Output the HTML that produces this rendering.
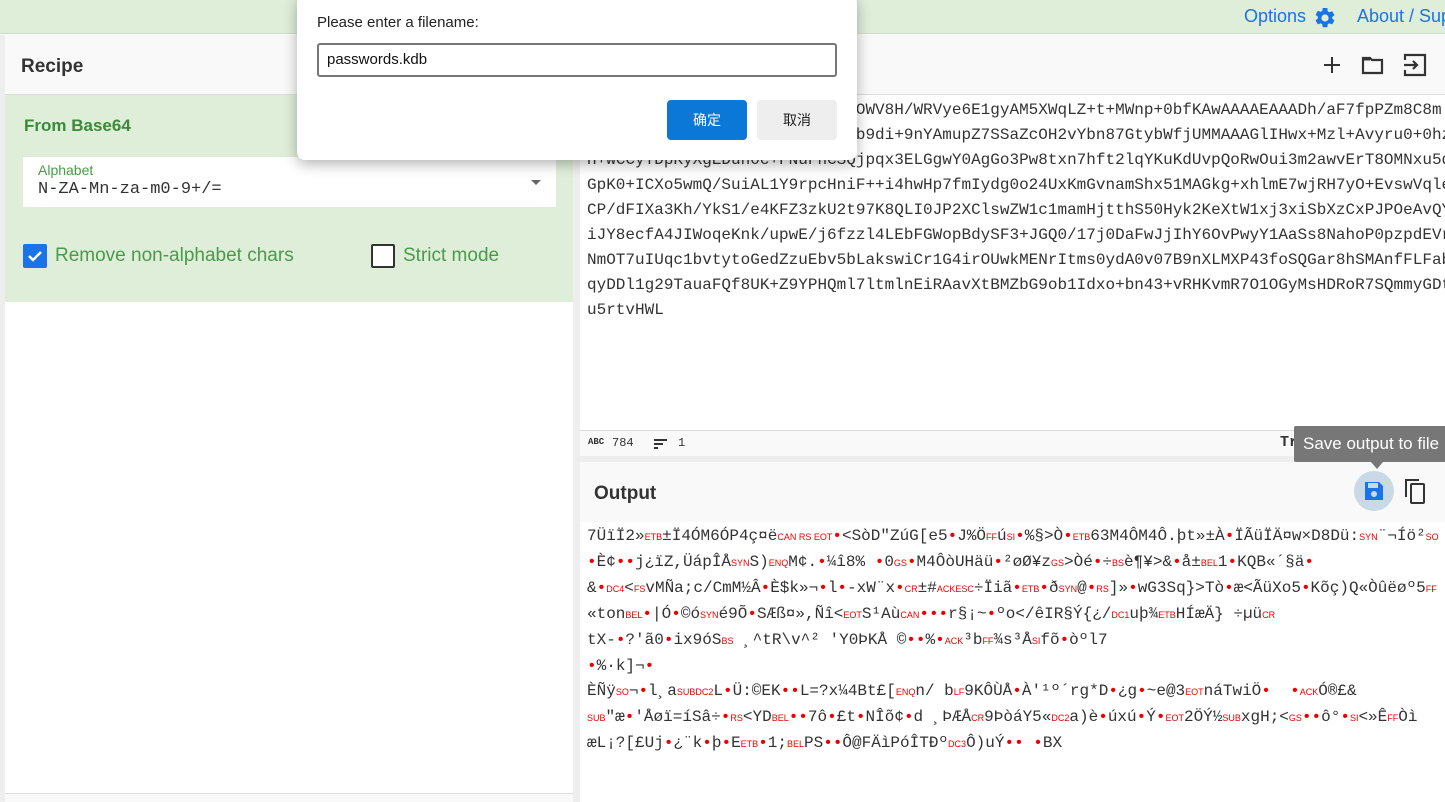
<!DOCTYPE html>
<html><head><meta charset="utf-8">
<style>
*{box-sizing:border-box;margin:0;padding:0}
body{width:1445px;height:802px;overflow:hidden;background:#fff;font-family:"Liberation Sans",sans-serif;position:relative}
.top{position:absolute;left:0;top:0;width:1445px;height:34px;background:#dfeed9;border-bottom:1px solid #d6d6d6}
.top .opt{position:absolute;left:1244px;top:6px;color:#1a73e8;font-size:18px}
.top .about{position:absolute;left:1357px;top:6px;color:#1a73e8;font-size:18px;white-space:nowrap}
.left{position:absolute;left:0;top:35px;width:580px;height:767px;background:#eee}
.lin{position:absolute;left:5px;top:0;width:568px;height:767px;background:#fff}
.rh{position:absolute;left:0;top:0;width:568px;height:60px;background:#f9f9f9;border-bottom:1px solid #ddd}
.rh span{position:absolute;left:16px;top:21px;font-size:19px;font-weight:bold;color:#333}
.op{position:absolute;left:0;top:60px;width:568px;height:207px;background:#dfeed9}
.op .t{position:absolute;left:19px;top:21px;font-size:17px;font-weight:bold;color:#3a8a3a}
.sel{position:absolute;left:18px;top:62px;width:533px;height:50px;background:#fff}
.sel .l{position:absolute;left:15px;top:5px;font-size:14px;color:#4a9a4a}
.sel .v{position:absolute;left:15px;top:23px;font-size:17px;font-family:"Liberation Mono",monospace;color:#333}
.sel .a{position:absolute;right:15px;top:23px;width:0;height:0;border-left:5px solid transparent;border-right:5px solid transparent;border-top:5px solid #666}
.cb{position:absolute;top:149px;width:24px;height:24px;border-radius:2px}
.cbl{position:absolute;top:150px;font-size:19px;color:#4a9a4a}
.bot{position:absolute;left:0;top:758px;width:568px;height:9px;background:#f9f9f9;border-top:1px solid #ddd}
.div{position:absolute;left:573px;top:35px;width:7px;height:767px;background:#eee}
.ih{position:absolute;left:580px;top:35px;width:865px;height:60px;background:#f9f9f9;border-bottom:1px solid #ddd}
.mono{font-family:"Liberation Mono",monospace;font-size:16px;color:#333;white-space:pre;line-height:25px}
.inp{position:absolute;left:587px;top:98px}
.sb{position:absolute;left:580px;top:430px;width:865px;height:26px;background:#f9f9f9;border-top:1px solid #ddd;font-family:"Liberation Mono",monospace;font-size:12px;color:#333}
.gap{position:absolute;left:580px;top:456px;width:865px;height:6px;background:#eee}
.oh{position:absolute;left:580px;top:462px;width:865px;height:60px;background:#f9f9f9}
.oh span{position:absolute;left:14px;top:21px;font-size:19px;font-weight:bold;color:#333}
.out{position:absolute;left:587px;top:524px}
.c{color:#e00;font-size:9px;font-family:"Liberation Sans",sans-serif}
.d{color:#e00}
.tip{position:absolute;left:1294px;top:426px;width:160px;height:36px;background:#777;color:#fff;font-size:17px;padding:8px 9px;white-space:nowrap;border-radius:2px}
.dlg{position:absolute;left:297px;top:-5px;width:560px;height:165px;background:#fff;border-radius:8px;box-shadow:0 4px 14px rgba(0,0,0,.3)}
.dlg .p{position:absolute;left:20px;top:19px;font-size:15px;color:#222}
.dlg .in{position:absolute;left:20px;top:48px;width:520px;height:34px;border:2px solid #777;border-radius:3px;font-size:15px;padding:6px 8px;color:#111}
.btn{position:absolute;top:105px;width:80px;height:40px;border-radius:4px;font-size:14px;text-align:center;line-height:40px}
</style></head><body>
<div class="top">
<span class="opt">Options</span>
<svg style="position:absolute;left:1313px;top:6px" width="24" height="24" viewBox="0 0 24 24"><path fill="#1a73e8" d="M19.14 12.94c.04-.3.06-.61.06-.94s-.02-.64-.07-.94l2.030-1.58a.5.5 0 0 0 .12-.61l-1.92-3.32a.5.5 0 0 0-.59-.22l-2.39.96a7 7 0 0 0-1.62-.94l-.36-2.54A.48.48 0 0 0 13.92 2h-3.840a.47.47 0 0 0-.47.41l-.36 2.54c-.59.24-1.13.57-1.62.94l-2.39-.96a.5.5 0 0 0-.59.22L2.74 8.470a.47.47 0 0 0 .12.61l2.03 1.58c-.05.3-.09.63-.09.94s.02.64.07.94l-2.03 1.58a.5.5 0 0 0-.12.61l1.92 3.32c.12.22.37.29.59.22l2.39-.96c.5.38 1.03.7 1.62.94l.36 2.54c.05.24.24.41.48.41h3.84c.24 0 .44-.17.47-.41l.36-2.54c.59-.24 1.13-.56 1.62-.94l2.39.96c.22.08.47 0 .59-.22l1.92-3.32a.46.46 0 0 0-.12-.61l-2.01-1.58zM12 15.6A3.6 3.6 0 1 1 12 8.4a3.6 3.6 0 0 1 0 7.2z"/></svg>
<span class="about">About / Support</span>
</div>
<div class="left"><div class="lin">
<div class="rh"><span>Recipe</span></div>
<div class="op"><div class="t">From Base64</div>
<div class="sel"><div class="l">Alphabet</div><div class="v">N-ZA-Mn-za-m0-9+/=</div><div class="a"></div></div>
<div class="cb" style="left:18px;background:#1a73e8"><svg width="24" height="24"><path d="M6 12l4 4 8-8" stroke="#fff" stroke-width="2.5" fill="none"/></svg></div>
<div class="cbl" style="left:50px">Remove non-alphabet chars</div>
<div class="cb" style="left:366px;border:2px solid #333;background:#fff"></div>
<div class="cbl" style="left:398px">Strict mode</div>
</div>
<div class="bot"></div>
</div></div>
<div class="div"></div>
<div class="ih">
<svg style="position:absolute;left:740px;top:18px" width="24" height="24"><path d="M12 4v16M4 12h16" stroke="#333" stroke-width="2"/></svg>
<svg style="position:absolute;left:780px;top:18px" width="26" height="24"><path d="M3 5h7l2 2h10v13H3z" stroke="#333" stroke-width="2.2" fill="none"/><path d="M3 6h7" stroke="#333" stroke-width="3"/></svg>
<svg style="position:absolute;left:822px;top:17px" width="26" height="26"><path d="M3 8V3h20v20H3v-5" stroke="#333" stroke-width="2.2" fill="none"/><path d="M2 13h13M11 9l4 4-4 4" stroke="#333" stroke-width="2.2" fill="none"/></svg>
</div>
<div class="mono inp">HdfSK2CgEjW9OPh0fG/Y0yqmAb3kOWV8H/WRVye6E1gyAM5XWqLZ+t+MWnp+0bfKAwAAAAEAAADh/aF7fpPZm8C8m
nG8+pL0wQrT1xYc4TkQa7Xp2LmRcb9di+9nYAmupZ7SSaZcOH2vYbn87GtybWfjUMMAAAGlIHwx+Mzl+Avyru0+0hz
H+wCCyTDpKyXgEDun0c+FNuFhCSQjpqx3ELGgwY0AgGo3Pw8txn7hft2lqYKuKdUvpQoRwOui3m2awvErT8OMNxu5d
GpK0+ICXo5wmQ/SuiAL1Y9rpcHniF++i4hwHp7fmIydg0o24UxKmGvnamShx51MAGkg+xhlmE7wjRH7yO+EvswVqle
CP/dFIXa3Kh/YkS1/e4KFZ3zkU2t97K8QLI0JP2XClswZW1c1mamHjtthS50Hyk2KeXtW1xj3xiSbXzCxPJPOeAvQY
iJY8ecfA4JIWoqeKnk/upwE/j6fzzl4LEbFGWopBdySF3+JGQ0/17j0DaFwJjIhY6OvPwyY1AaSs8NahoP0pzpdEVr
NmOT7uIUqc1bvtytoGedZzuEbv5bLakswiCr1G4irOUwkMENrItms0ydA0v07B9nXLMXP43foSQGar8hSMAnfFLFab
qyDDl1g29TauaFQf8UK+Z9YPHQml7ltmlnEiRAavXtBMZbG9ob1Idxo+bn43+vRHKvmR7O1OGyMsHDRoR7SQmmyGDt
u5rtvHWL</div>
<div class="sb"><span style="position:absolute;left:8px;top:6px;font-size:9px;font-weight:bold">ABC</span><span style="position:absolute;left:32px;top:5px">784</span>
<span style="position:absolute;left:74px;top:8px;width:13px;height:2px;background:#333"></span><span style="position:absolute;left:74px;top:12px;width:9px;height:2px;background:#333"></span><span style="position:absolute;left:74px;top:16px;width:4px;height:2px;background:#333"></span>
<span style="position:absolute;left:98px;top:5px">1</span>
<span style="position:absolute;left:700px;top:3px;font-size:15px;font-weight:bold">Tr</span></div>
<div class="gap"></div>
<div class="oh"><span>Output</span>
<div style="position:absolute;left:774px;top:9px;width:40px;height:40px;border-radius:50%;background:#c9d9e6"></div>
<svg style="position:absolute;left:783px;top:18px" width="22" height="22"><path d="M2 2h14l4 4v14H2z" fill="#1a73e8"/><rect x="5" y="3" width="10" height="5" fill="#c9d9e6"/><circle cx="11" cy="14" r="3" fill="#c9d9e6"/></svg>
<svg style="position:absolute;left:822px;top:15px" width="26" height="28"><path d="M4 20V3h13" stroke="#333" stroke-width="2" fill="none"/><rect x="9" y="7" width="13" height="19" rx="1" stroke="#333" stroke-width="2" fill="none"/></svg>
</div>
<div class="mono out">7ÜïÏ2»<span class="c">ETB</span>±Ï4ÓM6ÓP4ç¤ë<span class="c">CAN RS EOT</span><span class="d">•</span>&lt;SòD"ZúG[e5<span class="d">•</span>J%Ö<span class="c">FF</span>ú<span class="c">SI</span><span class="d">•</span>%§&gt;Ò<span class="d">•</span><span class="c">ETB</span>63M4ÔM4Ô.þt»±À<span class="d">•</span>ÏÃüÏÄ¤w×D8Dü:<span class="c">SYN</span>¨¬Íö²<span class="c">SO</span>
<span class="d">•</span>È¢<span class="d">••</span>j¿ïZ,ÜápÎÅ<span class="c">SYN</span>S)<span class="c">ENQ</span>M¢.<span class="d">•</span>¼î8% <span class="d">•</span>0<span class="c">GS</span><span class="d">•</span>M4ÔòUHäü<span class="d">•</span>²øØ¥z<span class="c">GS</span>&gt;Òé<span class="d">•</span>÷<span class="c">BS</span>è¶¥&gt;&amp;<span class="d">•</span>å±<span class="c">BEL</span>1<span class="d">•</span>KQB«´§ä<span class="d">•</span>
&amp;<span class="d">•</span><span class="c">DC4</span>&lt;<span class="c">FS</span>vMÑa;c/CmM½Â<span class="d">•</span>È$k»¬<span class="d">•</span>l<span class="d">•</span>-xW¨x<span class="d">•</span><span class="c">CR</span>±#<span class="c">ACKESC</span>÷Ïiã<span class="d">•</span><span class="c">ETB</span><span class="d">•</span>ð<span class="c">SYN</span>@<span class="d">•</span><span class="c">RS</span>]»<span class="d">•</span>wG3Sq}&gt;Tò<span class="d">•</span>æ&lt;ÃüXo5<span class="d">•</span>Kõç)Q«Òûëøº5<span class="c">FF</span>
«ton<span class="c">BEL</span><span class="d">•</span>|Ó<span class="d">•</span>©ó<span class="c">SYN</span>é9Õ<span class="d">•</span>SÆß¤»,Ñî&lt;<span class="c">EOT</span>S¹Aù<span class="c">CAN</span><span class="d">•••</span>r§¡~<span class="d">•</span>ºo&lt;/êIR§Ý{¿/<span class="c">DC1</span>uþ¾<span class="c">ETB</span>HÍæÄ} ÷µü<span class="c">CR</span>
tX-<span class="d">•</span>?'ã0<span class="d">•</span>ix9óS<span class="c">BS</span> ¸^tR\v^² 'Y0ÞKÅ ©<span class="d">••</span>%<span class="d">•</span><span class="c">ACK</span>³b<span class="c">FF</span>¾s³Å<span class="c">SI</span>fõ<span class="d">•</span>òºl7
<span class="d">•</span>%·k]¬<span class="d">•</span>
ÈÑÿ<span class="c">SO</span>¬<span class="d">•</span>l¸a<span class="c">SUBDC2</span>L<span class="d">•</span>Ü:©EK<span class="d">••</span>L=?x¼4Bt£[<span class="c">ENQ</span>n/ b<span class="c">LF</span>9KÔÙÅ<span class="d">•</span>À'¹º´rg*D<span class="d">•</span>¿g<span class="d">•</span>~e@3<span class="c">EOT</span>náTwiÖ<span class="d">•</span>  <span class="d">•</span><span class="c">ACK</span>Ó®£&amp;
<span class="c">SUB</span>"æ<span class="d">•</span>'Åøï=íSâ÷<span class="d">•</span><span class="c">RS</span>&lt;YD<span class="c">BEL</span><span class="d">••</span>7ô<span class="d">•</span>£t<span class="d">•</span>NÎõ¢<span class="d">•</span>d ¸ÞÆÅ<span class="c">CR</span>9ÞòáY5«<span class="c">DC2</span>a)è<span class="d">•</span>úxú<span class="d">•</span>Ý<span class="d">•</span><span class="c">EOT</span>2ÖÝ½<span class="c">SUB</span>xgH;&lt;<span class="c">GS</span><span class="d">••</span>ô°<span class="d">•</span><span class="c">SI</span>&lt;»Ê<span class="c">FF</span>Òì
æL¡?[£Uj<span class="d">•</span>¿¨k<span class="d">•</span>þ<span class="d">•</span>E<span class="c">ETB</span><span class="d">•</span>1;<span class="c">BEL</span>PS<span class="d">••</span>Ô@FÄìPóÎTÐº<span class="c">DC3</span>Ô)uÝ<span class="d">••</span> <span class="d">•</span>BX</div>
<div class="tip">Save output to file</div>
<div style="position:absolute;left:1435px;top:462px;border-left:6px solid transparent;border-right:6px solid transparent;border-top:7px solid #777;transform:translateX(-64px)"></div>
<div class="dlg">
<div class="p">Please enter a filename:</div>
<div class="in">passwords.kdb</div>
<div class="btn" style="left:370px;background:#0b78d7;color:#fff">确定</div>
<div class="btn" style="left:460px;background:#eee;color:#222">取消</div>
</div>
</body></html>
